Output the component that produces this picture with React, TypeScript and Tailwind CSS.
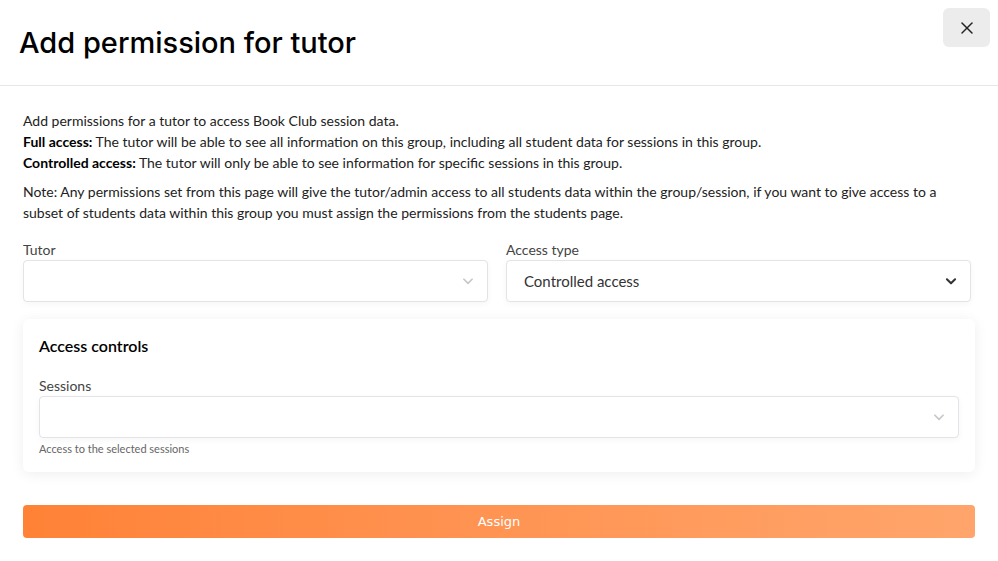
import { X } from "lucide-react";

function Chevron({ dark }: { dark?: boolean }) {
  return (
    <svg
      width="14"
      height="14"
      viewBox="0 0 24 24"
      fill="none"
      stroke={dark ? "#333333" : "#c8c8c8"}
      strokeWidth={dark ? 3.5 : 3}
      strokeLinecap="round"
      strokeLinejoin="round"
    >
      <path d="M5 9l7 7 7-7" />
    </svg>
  );
}

function SelectBox({ value, dark }: { value?: string; dark?: boolean }) {
  return (
    <div className="flex h-[42px] items-center justify-between rounded-[4px] border border-[#e3e3e8] bg-white pl-[17px] pr-[12px] shadow-[0_2px_6px_rgba(0,0,0,0.04)]">
      <span className="text-[15px] text-[#333]">{value}</span>
      <Chevron dark={dark} />
    </div>
  );
}

export default function App() {
  return (
    <div
      className="h-[561px] w-[998px] overflow-hidden rounded-[6px] bg-white text-[#111]"
      style={{ fontFamily: "Lato, 'Noto Sans', sans-serif" }}
    >
      {/* Header */}
      <div className="flex h-[86px] items-start justify-between border-b border-[#e6e6e6] pl-[19px] pr-[8px]">
        <h1
          className="mt-[23px] text-[29px] font-medium leading-[40px] text-black"
          style={{ fontFamily: "Inter, Lato, sans-serif" }}
        >
          Add permission for tutor
        </h1>
        <button className="mt-[8px] flex h-[39px] w-[47px] items-center justify-center rounded-[6px] bg-[#ececec] text-[#222]">
          <X size={20} strokeWidth={1.8} />
        </button>
      </div>

      {/* Body */}
      <div className="px-[23px] pt-[24px]">
        <div className="text-[14px] leading-[21px] text-[#222]">
          <p>Add permissions for a tutor to access Book Club session data.</p>
          <p>
            <b className="font-bold text-black">Full access:</b> The tutor will be able to see all information on this group,
            including all student data for sessions in this group.
          </p>
          <p>
            <b className="font-bold text-black">Controlled access:</b> The tutor will only be able to see information for
            specific sessions in this group.
          </p>
          <p className="mt-[8px]">
            Note: Any permissions set from this page will give the tutor/admin access to all students data within the
            group/session, if you want to give access to a subset of students data within this group you must assign the
            permissions from the students page.
          </p>
        </div>

        <div className="mr-[4px] mt-[17px] grid grid-cols-2 gap-[18px]">
          <div>
            <label className="block text-[14px] leading-[20px] text-[#444]">Tutor</label>
            <SelectBox />
          </div>
          <div>
            <label className="block text-[14px] leading-[20px] text-[#444]">Access type</label>
            <SelectBox value="Controlled access" dark />
          </div>
        </div>

        {/* Access controls card */}
        <div className="mt-[17px] rounded-[6px] bg-white px-[16px] pb-[16px] pt-[16px] shadow-[0_2px_14px_rgba(0,0,0,0.07)]">
          <h2 className="text-[16px] font-semibold leading-[22px] text-black">Access controls</h2>
          <label className="mt-[19px] block text-[14px] leading-[20px] text-[#444]">Sessions</label>
          <SelectBox />
          <p className="mt-[4px] text-[11px] leading-[14px] text-[#666]">Access to the selected sessions</p>
        </div>

        <button
          className="mt-[33px] flex h-[33px] w-full items-center justify-center rounded-[4px] bg-gradient-to-r from-[#ff8236] to-[#ffa56b] text-[13px] text-white"
          style={{ fontFamily: "'DejaVu Sans', sans-serif" }}
        >
          Assign
        </button>
      </div>
    </div>
  );
}
